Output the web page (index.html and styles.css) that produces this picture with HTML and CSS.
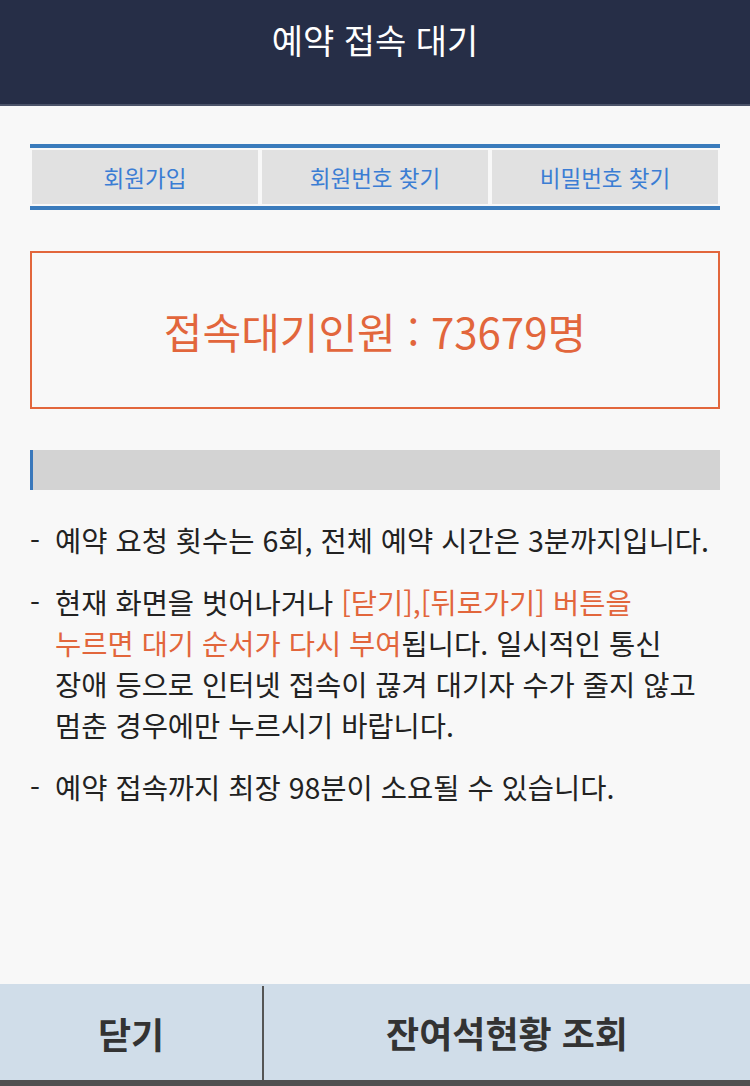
FILE: index.html
```html
<!DOCTYPE html>
<html lang="ko">
<head>
<meta charset="utf-8">
<title>예약 접속 대기</title>
<link rel="stylesheet" href="styles.css">
</head>
<body>
<div class="page">
  <header class="topbar">
    <h1 class="title">예약 접속 대기</h1>
  </header>
  <main class="content">
    <nav class="tabs">
      <a class="tab">회원가입</a>
      <a class="tab">회원번호 찾기</a>
      <a class="tab">비밀번호 찾기</a>
    </nav>
    <div class="count-box">접속대기인원 : 73679명</div>
    <div class="progress"></div>
    <ul class="notes">
      <li class="note"><span class="dash">-</span><span class="note-text">예약 요청 횟수는 6회, 전체 예약 시간은 3분까지입니다.</span></li>
      <li class="note"><span class="dash">-</span><span class="note-text">현재 화면을 벗어나거나 <em class="hl">[닫기],[뒤로가기] 버튼을<br>누르면 대기 순서가 다시 부여</em>됩니다. 일시적인 통신<br>장애 등으로 인터넷 접속이 끊겨 대기자 수가 줄지 않고<br>멈춘 경우에만 누르시기 바랍니다.</span></li>
      <li class="note"><span class="dash">-</span><span class="note-text">예약 접속까지 최장 98분이 소요될 수 있습니다.</span></li>
    </ul>
  </main>
  <footer class="actions">
    <button class="action action-close">닫기</button>
    <button class="action action-seats">잔여석현황 조회</button>
  </footer>
  <div class="bottom-strip"></div>
</div>
</body>
</html>
```

FILE: styles.css
```css
* { box-sizing: border-box; }
html, body { margin: 0; padding: 0; }
body {
  background: #f8f8f8;
  font-family: "Noto Sans CJK KR", "Noto Sans", sans-serif;
  color: #222;
}
.page {
  height: 1086px;
  display: flex;
  flex-direction: column;
}
.topbar {
  height: 106px;
  background: #262e47;
  border-bottom: 2px solid #4b5369;
  flex: none;
}
.title {
  margin: 0;
  padding-top: 15px;
  text-align: center;
  color: #fff;
  font-size: 34px;
  font-weight: 400;
  line-height: 50px;
}
.content {
  flex: 1;
  padding: 38px 30px 0;
}
.tabs {
  display: flex;
  gap: 4px;
  padding: 2px;
  border-top: 4px solid #3a7bbc;
  border-bottom: 4px solid #3a7bbc;
}
.tab {
  flex: 1;
  height: 54px;
  background: #e1e1e1;
  color: #3b7dd4;
  font-size: 22.5px;
  display: flex;
  align-items: center;
  justify-content: center;
}
.count-box {
  margin-top: 41px;
  height: 158px;
  border: 2px solid #e2663c;
  color: #e2663c;
  font-size: 42px;
  display: flex;
  align-items: center;
  justify-content: center;
}
.progress {
  margin-top: 41px;
  height: 40px;
  background: #d3d3d3;
  border-left: 3px solid #3a78bb;
}
.notes {
  list-style: none;
  margin: 29px 0 0;
  padding: 0;
}
.note {
  display: flex;
  font-size: 28.5px;
  line-height: 41px;
  margin-bottom: 21px;
}
.dash { width: 25px; flex: none; }
.note-text { flex: 1; white-space: nowrap; }
.hl { font-style: normal; color: #e2663c; }
.actions {
  flex: none;
  height: 96px;
  background: #d0dde9;
  display: flex;
  align-items: stretch;
}
.action {
  border: 0;
  background: transparent;
  font-family: inherit;
  font-size: 36px;
  font-weight: 700;
  color: #333;
  padding: 0;
}
.action-close {
  width: 264px;
  border-right: 2px solid #555;
  margin: 2px 0 0;
}
.action-seats { flex: 1; }
.bottom-strip {
  flex: none;
  height: 6px;
  background: #505050;
}
```
